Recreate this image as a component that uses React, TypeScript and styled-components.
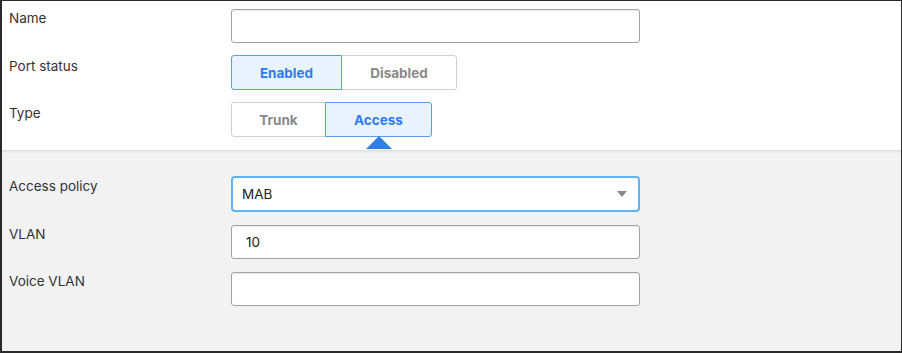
import React from 'react';
import styled, { createGlobalStyle, css } from 'styled-components';

const GlobalStyle = createGlobalStyle`
    html, body {
        margin: 0;
        padding: 0;
        background: #ffffff;
    }
    body {
        font-family: Inter, "Liberation Sans", Arial, sans-serif;
        color: #333333;
    }
    * {
        box-sizing: border-box;
    }
`;

const Frame = styled.div`
    width: 902px;
    height: 353px;
    border: 1px solid #2a2a2a;
    border-left-width: 2px;
    border-bottom-width: 2px;
    display: flex;
    flex-direction: column;
    overflow: hidden;
`;

const TopSection = styled.div`
    background: #ffffff;
    padding: 8px 0 0 7px;
    height: 149px;
    display: flex;
    flex-direction: column;
    gap: 12px;
    position: relative;
    z-index: 1;
`;

const DetailSection = styled.div`
    flex: 1;
    background: #f2f2f2;
    padding: 26px 0 0 7px;
    display: flex;
    flex-direction: column;
    gap: 13px;
    box-shadow: inset 0 3px 3px -2px rgba(0, 0, 0, 0.12);
`;

const Row = styled.div`
    display: flex;
    align-items: flex-start;
`;

const Label = styled.div<{ $offset?: number }>`
    width: 222px;
    flex: none;
    font-size: 13.5px;
    line-height: 16px;
    padding-top: ${props => props.$offset ?? 1}px;
    color: #333333;
`;

const TextInput = styled.div<{ $focused?: boolean }>`
    width: 409px;
    height: 34px;
    background: #ffffff;
    border: 1px solid #a3a3a3;
    border-radius: 3px;
    box-shadow: inset 0 1px 1px rgba(0, 0, 0, 0.08);
    display: flex;
    align-items: center;
    padding: 0 14px;
    font-size: 13.5px;
    color: #222222;
    ${props => props.$focused && css`
        height: 36px;
        border: 2px solid #62b3f2;
        border-radius: 4px;
        box-shadow: none;
        padding: 0 10px 0 9px;
        justify-content: space-between;
    `}
`;

const Caret = styled.svg`
    width: 10px;
    height: 6px;
    margin-right: 1px;
`;

const Segmented = styled.div<{ $height: number }>`
    display: flex;
    height: ${props => props.$height}px;
`;

const Segment = styled.div<{ $active?: boolean; $width: number; $pointer?: boolean }>`
    width: ${props => props.$width}px;
    height: 100%;
    display: flex;
    align-items: center;
    justify-content: center;
    font-size: 13.5px;
    font-weight: 700;
    border: 1px solid #cfcfcf;
    color: #8a8a8a;
    background: #ffffff;
    position: relative;

    &:first-child {
        border-radius: 3px 0 0 3px;
    }
    &:last-child {
        border-radius: 0 3px 3px 0;
    }
    & + & {
        margin-left: -1px;
    }

    ${props => props.$active && css`
        border-color: #5a9cf0;
        background: #e9f2ff;
        color: #2d7de8;
        z-index: 1;
    `}

    ${props => props.$pointer && css`
        &::after {
            content: '';
            position: absolute;
            left: 50%;
            top: 100%;
            margin-left: -13px;
            border-left: 13px solid transparent;
            border-right: 13px solid transparent;
            border-bottom: 13px solid #2f7ee3;
        }
    `}
`;

export default function App() {
    return (
        <>
            <GlobalStyle />
            <Frame>
                <TopSection>
                    <Row>
                        <Label>Name</Label>
                        <TextInput />
                    </Row>
                    <Row>
                        <Label $offset={3}>Port status</Label>
                        <Segmented $height={35}>
                            <Segment $active $width={111}>Enabled</Segment>
                            <Segment $width={116}>Disabled</Segment>
                        </Segmented>
                    </Row>
                    <Row>
                        <Label $offset={3}>Type</Label>
                        <Segmented $height={35}>
                            <Segment $width={95}>Trunk</Segment>
                            <Segment $active $pointer $width={107}>Access</Segment>
                        </Segmented>
                    </Row>
                </TopSection>
                <DetailSection>
                    <Row>
                        <Label $offset={2}>Access policy</Label>
                        <TextInput $focused>
                            MAB
                            <Caret viewBox="0 0 10 6">
                                <path d="M0 0 L10 0 L5 6 Z" fill="#8a8a8a" />
                            </Caret>
                        </TextInput>
                    </Row>
                    <Row>
                        <Label>VLAN</Label>
                        <TextInput>10</TextInput>
                    </Row>
                    <Row>
                        <Label>Voice VLAN</Label>
                        <TextInput />
                    </Row>
                </DetailSection>
            </Frame>
        </>
    );
}
